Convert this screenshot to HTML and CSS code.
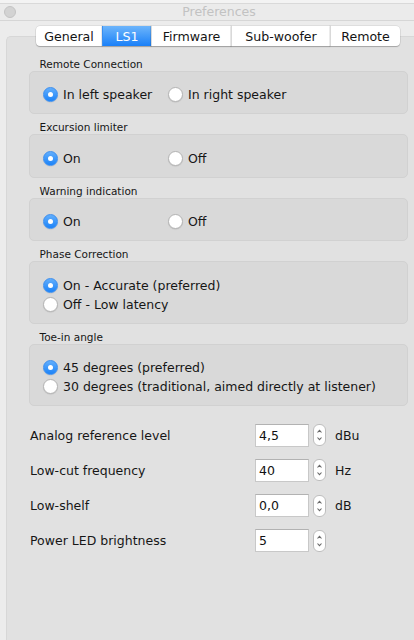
FILE: index.html
```html
<!DOCTYPE html>
<html>
<head>
<meta charset="utf-8">
<title>Preferences</title>
<link rel="stylesheet" href="styles.css">
</head>
<body>
<div class="window">
  <div class="titlebar">
    <div class="lights"><span class="light"></span></div>
    <div class="title">Preferences</div>
    <div></div>
  </div>
  <div class="panel">
    <div class="tabs">
      <div class="tab tab-general">General</div>
      <div class="tab tab-ls1 active">LS1</div>
      <div class="tab tab-firmware">Firmware</div>
      <div class="tab tab-sub">Sub-woofer</div>
      <div class="tab tab-remote">Remote</div>
    </div>
    <div class="content">
      <div class="section">
        <div class="section-label">Remote Connection</div>
        <div class="group">
          <div class="row cols">
            <div class="option"><span class="radio on"></span><span>In left speaker</span></div>
            <div class="option"><span class="radio"></span><span>In right speaker</span></div>
          </div>
        </div>
      </div>
      <div class="section">
        <div class="section-label">Excursion limiter</div>
        <div class="group">
          <div class="row cols">
            <div class="option"><span class="radio on"></span><span>On</span></div>
            <div class="option"><span class="radio"></span><span>Off</span></div>
          </div>
        </div>
      </div>
      <div class="section">
        <div class="section-label">Warning indication</div>
        <div class="group">
          <div class="row cols">
            <div class="option"><span class="radio on"></span><span>On</span></div>
            <div class="option"><span class="radio"></span><span>Off</span></div>
          </div>
        </div>
      </div>
      <div class="section">
        <div class="section-label">Phase Correction</div>
        <div class="group">
          <div class="option row"><span class="radio on"></span><span>On - Accurate (preferred)</span></div>
          <div class="option row"><span class="radio"></span><span>Off - Low latency</span></div>
        </div>
      </div>
      <div class="section">
        <div class="section-label">Toe-in angle</div>
        <div class="group">
          <div class="option row"><span class="radio on"></span><span>45 degrees (preferred)</span></div>
          <div class="option row"><span class="radio"></span><span>30 degrees (traditional, aimed directly at listener)</span></div>
        </div>
      </div>

      <div class="fields">
        <div class="field">
          <span class="field-label">Analog reference level</span>
          <span class="input">4,5</span>
          <span class="stepper"><svg width="13" height="22" viewBox="0 0 13 22"><rect x="0.5" y="0.5" width="12" height="21" rx="5.5" fill="#fff" stroke="#bdbdbd"/><path d="M4.5 8.5 L6.5 6.3 L8.5 8.5" fill="none" stroke="#6a6a6a" stroke-width="1.1"/><path d="M4.5 13.5 L6.5 15.7 L8.5 13.5" fill="none" stroke="#6a6a6a" stroke-width="1.1"/></svg></span>
          <span class="unit">dBu</span>
        </div>
        <div class="field">
          <span class="field-label">Low-cut frequency</span>
          <span class="input">40</span>
          <span class="stepper"><svg width="13" height="22" viewBox="0 0 13 22"><rect x="0.5" y="0.5" width="12" height="21" rx="5.5" fill="#fff" stroke="#bdbdbd"/><path d="M4.5 8.5 L6.5 6.3 L8.5 8.5" fill="none" stroke="#6a6a6a" stroke-width="1.1"/><path d="M4.5 13.5 L6.5 15.7 L8.5 13.5" fill="none" stroke="#6a6a6a" stroke-width="1.1"/></svg></span>
          <span class="unit">Hz</span>
        </div>
        <div class="field">
          <span class="field-label">Low-shelf</span>
          <span class="input">0,0</span>
          <span class="stepper"><svg width="13" height="22" viewBox="0 0 13 22"><rect x="0.5" y="0.5" width="12" height="21" rx="5.5" fill="#fff" stroke="#bdbdbd"/><path d="M4.5 8.5 L6.5 6.3 L8.5 8.5" fill="none" stroke="#6a6a6a" stroke-width="1.1"/><path d="M4.5 13.5 L6.5 15.7 L8.5 13.5" fill="none" stroke="#6a6a6a" stroke-width="1.1"/></svg></span>
          <span class="unit">dB</span>
        </div>
        <div class="field">
          <span class="field-label">Power LED brightness</span>
          <span class="input">5</span>
          <span class="stepper"><svg width="13" height="22" viewBox="0 0 13 22"><rect x="0.5" y="0.5" width="12" height="21" rx="5.5" fill="#fff" stroke="#bdbdbd"/><path d="M4.5 8.5 L6.5 6.3 L8.5 8.5" fill="none" stroke="#6a6a6a" stroke-width="1.1"/><path d="M4.5 13.5 L6.5 15.7 L8.5 13.5" fill="none" stroke="#6a6a6a" stroke-width="1.1"/></svg></span>
          <span class="unit"></span>
        </div>
      </div>
    </div>
  </div>
</div>
</body>
</html>
```

FILE: styles.css
```css
html, body {
  margin: 0;
  padding: 0;
  height: 640px;
  overflow: hidden;
  background: #ececec;
}
body {
  font-family: "DejaVu Sans", sans-serif;
  color: #161616;
}
.window {
  width: 414px;
  height: 640px;
  background: #ececec;
  border-top: 3px solid #f3f3f3;
  overflow: hidden;
}
.titlebar {
  display: grid;
  grid-template-columns: 1fr auto 1fr;
  align-items: center;
  height: 16px;
  padding-left: 24px;
  border-top: 1px solid #d9d9d9;
  border-bottom: 1px solid #d6d6d6;
  background: #ebebeb;
}
.lights {
  display: flex;
  margin-left: -20px;
}
.light {
  width: 10px;
  height: 10px;
  border-radius: 50%;
  background: #d3d3d3;
  border: 1px solid #c4c4c4;
}
.title {
  font-size: 12.5px;
  color: #c2c2c2;
  line-height: 16px;
}
.panel {
  margin: 15px 0 0 6px;
  height: 620px;
  background: #e1e1e1;
  border: 1px solid #d7d7d7;
  border-right: none;
  border-radius: 5px 0 0 0;
}
.tabs {
  display: flex;
  margin-top: -11px;
  padding-left: 29px;
}
.tab {
  height: 20px;
  line-height: 21px;
  font-size: 12.6px;
  text-align: center;
  background: #fff;
  border-left: 1px solid #d9d9d9;
  box-shadow: 0 1px 1px rgba(0,0,0,0.22), 0 0 0 0.5px rgba(0,0,0,0.12);
  color: #141414;
}
.tab:first-child {
  border-left: none;
  border-radius: 4px 0 0 4px;
}
.tab:last-child {
  border-radius: 0 4px 4px 0;
}
.tab-general { width: 66px; }
.tab-ls1 { width: 48px; }
.tab-firmware { width: 79px; }
.tab-sub { width: 98px; }
.tab-remote { width: 69px; }
.tab.active {
  background: linear-gradient(#6db5fb, #1a80f8);
  color: #fff;
  border-left-color: #3a8ff0;
}
.content {
  padding: 0 6px 0 22px;
}
.section {
  margin-top: 7px;
}
.section:first-child {
  margin-top: 11.5px;
}
.section-label {
  font-size: 10.5px;
  line-height: 13px;
  padding-left: 10.5px;
  color: #161616;
}
.group {
  background: #d9d9d9;
  border: 1px solid #d1d1d1;
  border-radius: 5px;
  padding: 13.5px 0 9px 13px;
}
.row {
  height: 19px;
}
.cols {
  display: grid;
  grid-template-columns: 125px auto;
}
.option {
  display: flex;
  align-items: center;
  font-size: 12.5px;
  color: #161616;
}
.radio {
  width: 15px;
  height: 15px;
  box-sizing: border-box;
  border-radius: 50%;
  background: #fff;
  border: 1px solid #b4b4b4;
  box-shadow: 0 0.5px 1px rgba(0,0,0,0.12);
  margin-right: 5px;
  display: flex;
  align-items: center;
  justify-content: center;
  flex: none;
}
.radio.on {
  background: linear-gradient(#62aefc, #1c83f8);
  border-color: #3c8ff0;
}
.radio.on::after {
  content: "";
  width: 5px;
  height: 5px;
  border-radius: 50%;
  background: #fff;
}
.fields {
  margin-top: 17.5px;
  display: flex;
  flex-direction: column;
  gap: 12.3px;
  padding-left: 1px;
}
.field {
  display: flex;
  align-items: center;
  height: 23px;
  font-size: 12.5px;
}
.field-label {
  width: 225px;
}
.input {
  width: 54px;
  height: 23px;
  box-sizing: border-box;
  background: #fff;
  border: 1px solid #c8c8c8;
  border-top-color: #b2b2b2;
  padding-left: 3px;
  line-height: 21px;
  color: #111;
}
.stepper {
  margin-left: 4px;
  display: flex;
}
.unit {
  margin-left: 9px;
}
```
